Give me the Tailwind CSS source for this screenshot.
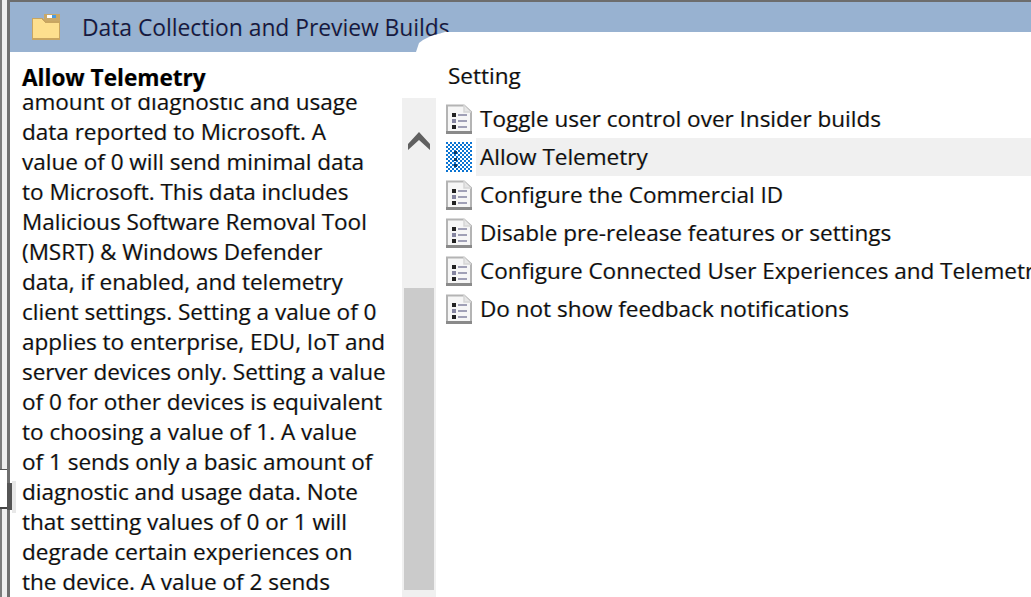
<!DOCTYPE html>
<html lang="en">
<head>
<meta charset="UTF-8" />
<title>Data Collection and Preview Builds</title>
<script src="https://cdn.jsdelivr.net/npm/@tailwindcss/browser@4"></script>
</head>
<body class="bg-white font-['Open_Sans',sans-serif] text-[#111] overflow-hidden [text-shadow:-0.6px_0_#f0b05a70,0.6px_0_#3f9be870]">
<svg width="0" height="0" class="absolute">
  <defs>
    <pattern id="dither" width="4" height="4" patternUnits="userSpaceOnUse" shape-rendering="crispEdges">
      <rect width="4" height="4" fill="#fff" />
      <rect width="2" height="2" fill="#0b74d2" />
      <rect x="2" y="2" width="2" height="2" fill="#0b74d2" />
    </pattern>
    <symbol id="doc" viewBox="0 0 26 30">
      <path d="M1 1.500H18L25 8V28.500H1Z" fill="#f6f6f6" stroke="#b4b4b4" stroke-width="2" />
      <path d="M0 28.500H26" stroke="#8a8a8a" stroke-width="3" />
      <path d="M18 1V8H25" fill="#e6e6e6" stroke="#d6d6d6" stroke-width="1.500" />
      <rect x="6" y="9" width="4" height="4" fill="#222" />
      <rect x="6" y="15" width="4" height="4" fill="#8585a0" />
      <rect x="6" y="21" width="4" height="4" fill="#222" />
      <path d="M12 11H21M12 17H21M12 23H21" stroke="#a0a0b6" stroke-width="2" />
    </symbol>
  </defs>
</svg>

<div class="flex w-[1031px] h-[597px] overflow-hidden relative">
  <!-- window edge on the left -->
  <div class="w-[2px] bg-[#7b7b7b] shrink-0"></div>
  <div class="w-[5px] bg-[#eeeeee] shrink-0"></div>
  <div class="w-[3px] bg-[#6f6f6f] shrink-0"></div>
  <div class="absolute left-0 top-[469px] w-[7px] h-[40px] bg-white border-t border-b-2 border-t-[#555] border-b-[#444]"></div>
  <div class="absolute left-[7px] top-[483px] w-[5px] h-[27px] bg-[#555]"></div>
  <div class="absolute left-[12px] top-[481px] w-[4px] h-[32px] bg-[#e8e8e8]"></div>

  <div class="flex-1 flex flex-col border-t-2 border-[#6d6d6d] min-w-0">
    <!-- header -->
    <div class="relative h-[50px] shrink-0 bg-[#98b2d1] flex items-start pl-[22px] pt-[12px]">
      <svg width="28" height="26" viewBox="0 0 28 26" class="shrink-0" shape-rendering="crispEdges">
        <path d="M12 0H28V24H12Z" fill="#c9a868" />
        <rect x="15" y="1" width="9" height="3" fill="#fff" />
        <rect x="20" y="1" width="4" height="3" fill="#4a9be0" />
        <path d="M0 4H10L13 7H28V26H0Z" fill="#c8a561" />
        <path d="M1 5H10L13 9H27V24H1Z" fill="#fddf8e" />
      </svg>
      <span class="ml-[22px] -mt-[1px] text-[22.8px] leading-[30px] text-[#141a42] whitespace-nowrap">Data Collection and Preview Builds</span>
      <div class="absolute left-[406px] top-[30px] right-0 bottom-0 bg-white [clip-path:polygon(0_20px,3px_11px,7px_8px,15px_4px,29px_0,100%_0,100%_100%)]"></div>
    </div>

    <div class="flex-1 flex min-h-0">
      <!-- description -->
      <div class="w-[426px] shrink-0 flex flex-col min-h-0 pt-[11px] relative">
        <h2 class="pl-[12px] text-[22.6px] leading-[30px] font-bold text-black whitespace-nowrap">Allow Telemetry</h2>
        <div class="flex-1 flex min-h-0 mt-[4px]">
          <div class="w-[392px] pl-[12px] overflow-hidden">
            <p class="-mt-[10px] text-[22.5px] leading-[30px] whitespace-nowrap">
              amount of diagnostic and usage<br />
              data reported to Microsoft. A<br />
              value of 0 will send minimal data<br />
              to Microsoft. This data includes<br />
              Malicious Software Removal Tool<br />
              (MSRT) &amp; Windows Defender<br />
              data, if enabled, and telemetry<br />
              client settings. Setting a value of 0<br />
              applies to enterprise, EDU, IoT and<br />
              server devices only. Setting a value<br />
              of 0 for other devices is equivalent<br />
              to choosing a value of 1. A value<br />
              of 1 sends only a basic amount of<br />
              diagnostic and usage data. Note<br />
              that setting values of 0 or 1 will<br />
              degrade certain experiences on<br />
              the device. A value of 2 sends
            </p>
          </div>
          <!-- scrollbar -->
          <div class="w-[34px] shrink-0 mt-[1px] bg-[#f0f0f0] relative">
            <svg width="24" height="20" viewBox="0 0 24 20" class="absolute left-[5px] top-[33px]">
              <path d="M1 13L12 1L23 13V19L12 9L1 19Z" fill="#606060" />
            </svg>
            <div class="absolute left-[2px] right-[2px] top-[190px] bottom-[7px] bg-[#cbcbcb]"></div>
          </div>
        </div>
      </div>

      <!-- settings list -->
      <div class="flex-1 min-w-0 pt-[9px]">
        <div class="pl-[12px] text-[22.5px] leading-[30px]">Setting</div>
        <div class="mt-[9px] flex flex-col text-[22.5px] leading-[38px] whitespace-nowrap">
          <div class="flex items-center h-[38px] pl-[10px]">
            <svg width="26" height="30" class="shrink-0"><use href="#doc" /></svg>
            <span class="ml-[8px]">Toggle user control over Insider builds</span>
          </div>
          <div class="flex items-center h-[38px] pl-[10px]">
            <svg width="26" height="30" viewBox="0 0 26 30" class="shrink-0" shape-rendering="crispEdges">
              <rect width="26" height="30" fill="url(#dither)" />
              <rect x="8" y="9" width="3" height="3" fill="#0b3a66" />
              <rect x="8" y="16" width="3" height="3" fill="#0b3a66" />
              <rect x="8" y="22" width="3" height="3" fill="#0b3a66" />
            </svg>
            <span class="ml-[4px] flex-1 bg-[#f0f0f0] pl-[4px]">Allow Telemetry</span>
          </div>
          <div class="flex items-center h-[38px] pl-[10px]">
            <svg width="26" height="30" class="shrink-0"><use href="#doc" /></svg>
            <span class="ml-[8px]">Configure the Commercial ID</span>
          </div>
          <div class="flex items-center h-[38px] pl-[10px]">
            <svg width="26" height="30" class="shrink-0"><use href="#doc" /></svg>
            <span class="ml-[8px]">Disable pre-release features or settings</span>
          </div>
          <div class="flex items-center h-[38px] pl-[10px]">
            <svg width="26" height="30" class="shrink-0"><use href="#doc" /></svg>
            <span class="ml-[8px]">Configure Connected User Experiences and Telemetry</span>
          </div>
          <div class="flex items-center h-[38px] pl-[10px]">
            <svg width="26" height="30" class="shrink-0"><use href="#doc" /></svg>
            <span class="ml-[8px]">Do not show feedback notifications</span>
          </div>
        </div>
      </div>
    </div>
  </div>
</div>
</body>
</html>
